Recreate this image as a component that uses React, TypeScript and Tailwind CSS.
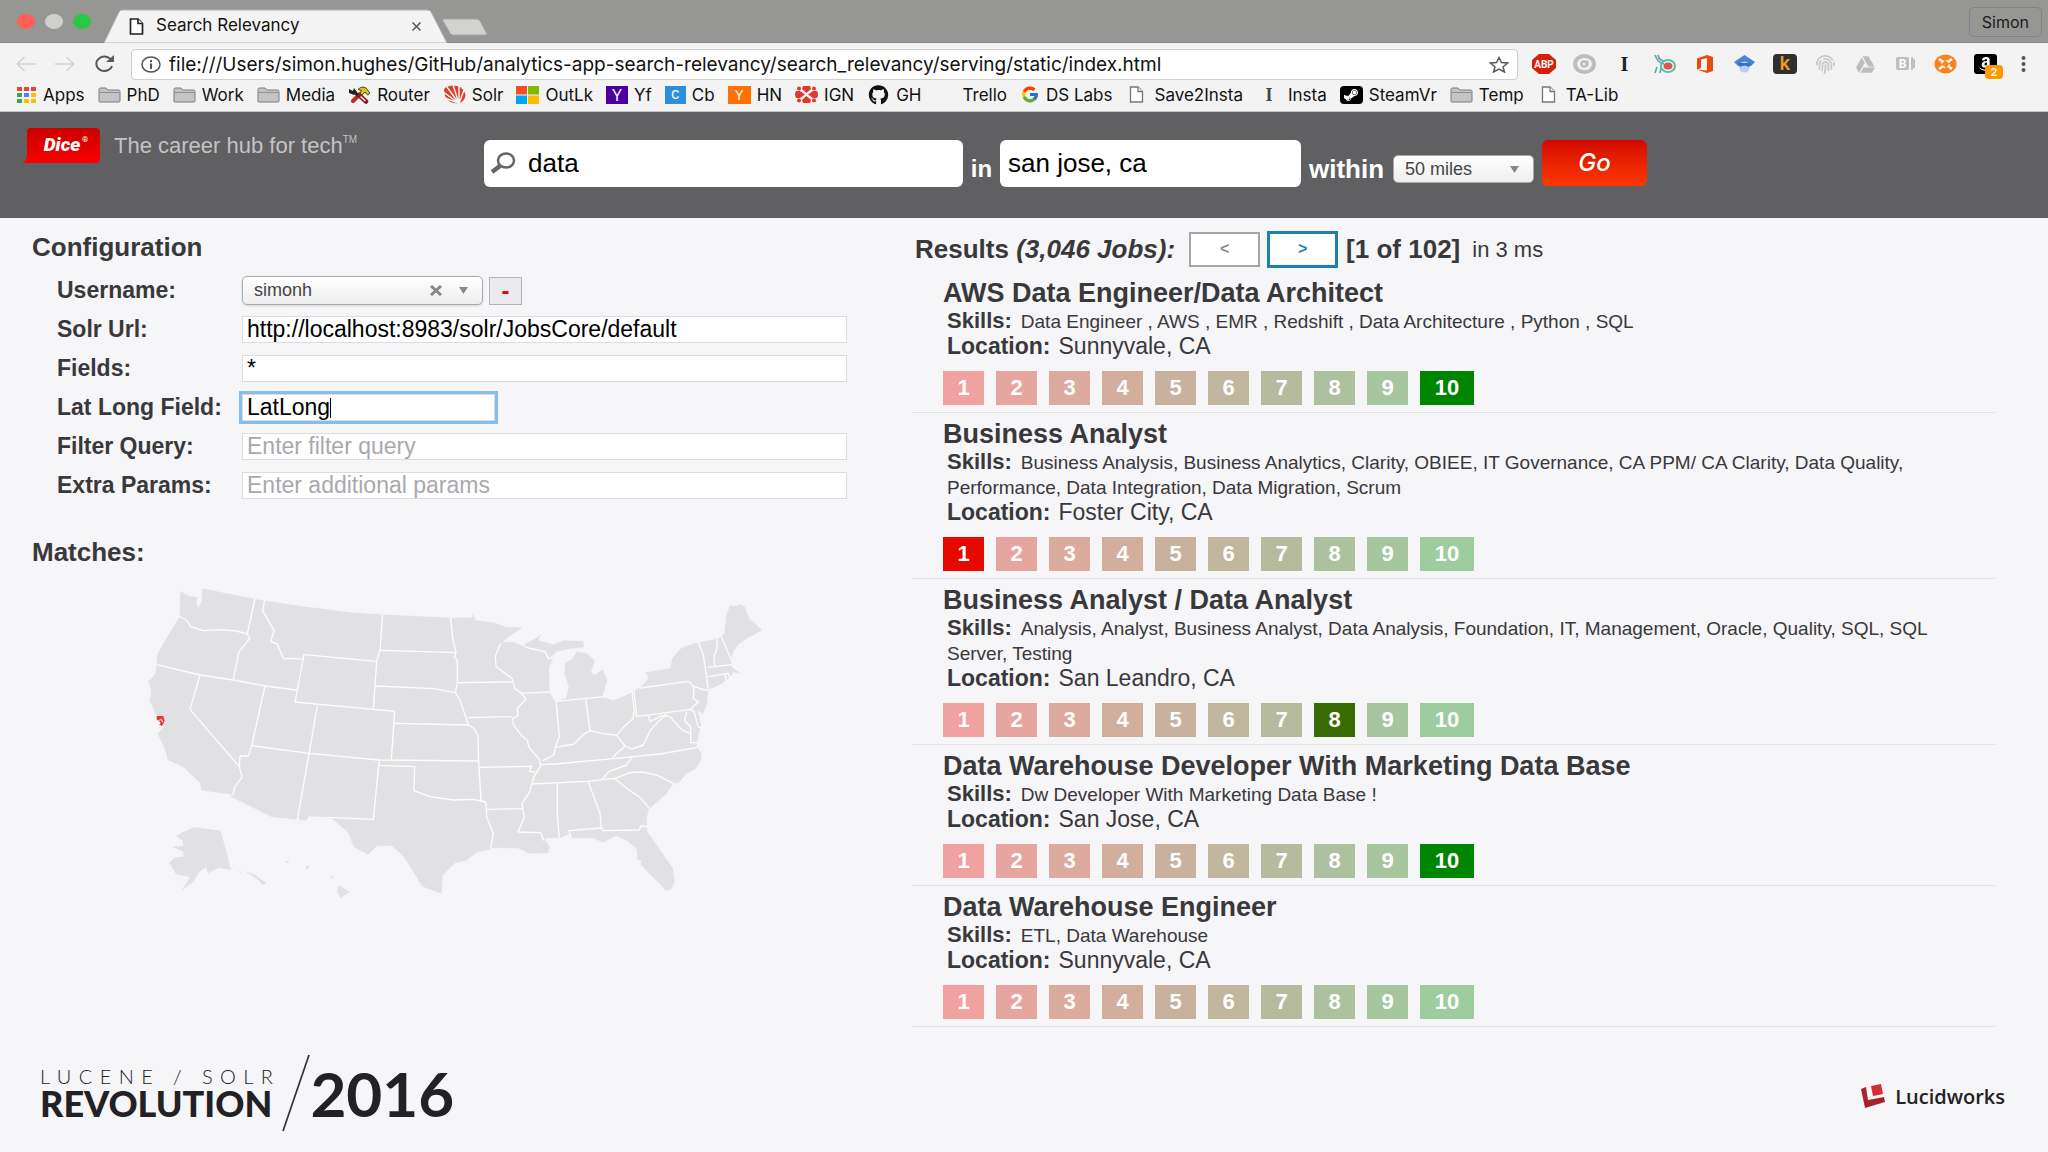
import type { ReactNode } from "react";
import { FaGithub, FaSteamSymbol, FaFingerprint, FaGoogleDrive, FaAmazon } from "react-icons/fa";
import { FcGoogle } from "react-icons/fc";

interface Job {
  title: string;
  skills: string;
  location: string;
  rating?: number;
}

interface Bookmark {
  label: string;
  icon: ReactNode;
}

const JOBS: Job[] = [
  {
    title: "AWS Data Engineer/Data Architect",
    skills: "Data Engineer , AWS , EMR , Redshift , Data Architecture , Python , SQL",
    location: "Sunnyvale, CA",
    rating: 10,
  },
  {
    title: "Business Analyst",
    skills:
      "Business Analysis, Business Analytics, Clarity, OBIEE, IT Governance, CA PPM/ CA Clarity, Data Quality, Performance, Data Integration, Data Migration, Scrum",
    location: "Foster City, CA",
    rating: 1,
  },
  {
    title: "Business Analyst / Data Analyst",
    skills:
      "Analysis, Analyst, Business Analyst, Data Analysis, Foundation, IT, Management, Oracle, Quality, SQL, SQL Server, Testing",
    location: "San Leandro, CA",
    rating: 8,
  },
  {
    title: "Data Warehouse Developer With Marketing Data Base",
    skills: "Dw Developer With Marketing Data Base !",
    location: "San Jose, CA",
    rating: 10,
  },
  {
    title: "Data Warehouse Engineer",
    skills: "ETL, Data Warehouse",
    location: "Sunnyvale, CA",
  },
];

const RATINGS = [
  { value: 1, idle: "bg-[#f0a2a0]", active: "bg-[#e60900]" },
  { value: 2, idle: "bg-[#e6a59e]", active: "bg-[#cc1f00]" },
  { value: 3, idle: "bg-[#dcab9d]", active: "bg-[#b33300]" },
  { value: 4, idle: "bg-[#d2af9d]", active: "bg-[#994000]" },
  { value: 5, idle: "bg-[#c9b29d]", active: "bg-[#804d00]" },
  { value: 6, idle: "bg-[#c0b79e]", active: "bg-[#6b5a00]" },
  { value: 7, idle: "bg-[#b7bb9d]", active: "bg-[#556200]" },
  { value: 8, idle: "bg-[#adc19e]", active: "bg-[#3a6b00]" },
  { value: 9, idle: "bg-[#a6c69f]", active: "bg-[#1d7700]" },
  { value: 10, idle: "bg-[#9dcc9f]", active: "bg-[#008500]" },
];

function FolderIcon() {
  return (
    <svg width="23" height="16" viewBox="0 0 23 16">
      <path d="M1 14.5V2.5Q1 1 2.5 1H8l2 2h10.500Q22 3 22 4.500V14q0 1-1 1H2q-1 0-1-.5Z" fill="#c4c4c6" stroke="#7d7d80" />
      <path d="M1.500 5.500h20" stroke="#8f8f92" />
    </svg>
  );
}

function FileIcon({ dark = false }: { dark?: boolean }) {
  return (
    <svg width="15" height="17" viewBox="0 0 15 17" fill="#fff" stroke={dark ? "#222" : "#777"} strokeWidth={dark ? 1.700 : 1.300}>
      <path d="M1.500 1h7.500l4.500 4.500V16h-12Z" />
      <path d="M9 1v4.500h4.500" />
    </svg>
  );
}

function AppsIcon() {
  const colors = ["#ea4335", "#ea4335", "#ea4335", "#34a853", "#4285f4", "#fbbc05", "#34a853", "#fbbc05", "#fbbc05"];
  return (
    <svg width="20" height="16" viewBox="0 0 20 16">
      {colors.map((c, i) => (
        <rect key={i} x={(i % 3) * 7} y={Math.floor(i / 3) * 6} width="5" height="4" fill={c} />
      ))}
    </svg>
  );
}

function ToolsIcon() {
  return (
    <svg width="23" height="18" viewBox="0 0 23 18" fill="none">
      <path d="M12 8 5 15" stroke="#c22a1e" strokeWidth="4" strokeLinecap="round" />
      <path d="m5 5 6 5" stroke="#222" strokeWidth="3" />
      <path d="m12 10 6 5.500" stroke="#8e1d16" strokeWidth="4.500" strokeLinecap="round" />
      <path d="m12.500 10.500 5 4.500" stroke="#eee" strokeWidth="1.500" />
      <path d="M10 3.500Q14-.5 18 2l4 5-2.500 2L17 6l-3 3-2-2 1.500-2.500Z" fill="#d8c22a" stroke="#554a10" />
      <path d="M1 3l4 2 1-3 3 4-3 3-5-2Z" fill="#222" />
    </svg>
  );
}

function SolrIcon() {
  return (
    <svg width="23" height="19" viewBox="0 0 23 19">
      <path d="M1 4Q6-1 14 1q7 2 8.500 9Q22 16 16 18.500 6 19 2 11Z" fill="#d9412b" />
      <path d="M16 18.500 1 7.500M16 18.500 4 2M16 18.500 10 0M16 18.500 16 1M16 18.500 21 5M16 18.500 2 13" stroke="#f4f4f4" strokeWidth="1.400" />
    </svg>
  );
}

function MicrosoftIcon() {
  return (
    <svg width="23" height="18" viewBox="0 0 23 18">
      <path d="M0 0h11v8.500H0Z" fill="#f25022" />
      <path d="M12 0h11v8.500H12Z" fill="#7fba00" />
      <path d="M0 9.500h11V18H0Z" fill="#00a4ef" />
      <path d="M12 9.500h11V18H12Z" fill="#ffb900" />
    </svg>
  );
}

function IgnIcon() {
  return (
    <svg width="23" height="19" viewBox="0 0 23 19" fill="#e0392b">
      <path d="M8 1h7l1 3-4.500 4L7 4ZM8 18h7l1-3-4.500-4L7 15ZM1 6h4l5 3.500L5 13H1Q-1 9.500 1 6ZM22 6h-4l-5 3.500 5 3.500h4q2-3.500 0-7Z" />
      <circle cx="4" cy="3.500" r="2" />
      <circle cx="19" cy="3.500" r="2" />
      <circle cx="4" cy="15.500" r="2" />
      <circle cx="19" cy="15.500" r="2" />
    </svg>
  );
}

const BOOKMARKS: Bookmark[] = [
  { label: "Apps", icon: <AppsIcon /> },
  { label: "PhD", icon: <FolderIcon /> },
  { label: "Work", icon: <FolderIcon /> },
  { label: "Media", icon: <FolderIcon /> },
  { label: "Router", icon: <ToolsIcon /> },
  { label: "Solr", icon: <SolrIcon /> },
  { label: "OutLk", icon: <MicrosoftIcon /> },
  {
    label: "Yf",
    icon: (
      <span className="flex h-[18px] w-[22px] items-center justify-center bg-[#4a00a0] font-['Open_Sans'] text-[17px] text-white">Y</span>
    ),
  },
  {
    label: "Cb",
    icon: <span className="flex h-[18px] w-[21px] items-center justify-center bg-[#2d8fdc] pb-0.5 text-[15px] text-white">c</span>,
  },
  {
    label: "HN",
    icon: <span className="flex h-[18px] w-[23px] items-center justify-center bg-[#ff7100] text-[13px] text-white">Y</span>,
  },
  { label: "IGN", icon: <IgnIcon /> },
  { label: "GH", icon: <FaGithub className="h-5 w-[23px] text-[#111]" /> },
  { label: "Trello", icon: <span className="w-[22px]" /> },
  { label: "DS Labs", icon: <FcGoogle className="h-[19px] w-5" /> },
  { label: "Save2Insta", icon: <span className="mx-1"><FileIcon /></span> },
  { label: "Insta", icon: <span className="w-[26px] text-center font-['Liberation_Serif'] text-[18px] font-bold text-[#444]">I</span> },
  {
    label: "SteamVr",
    icon: (
      <span className="flex h-[18px] w-[23px] items-center justify-center rounded-sm bg-black">
        <FaSteamSymbol className="size-4 text-white" />
      </span>
    ),
  },
  { label: "Temp", icon: <FolderIcon /> },
  { label: "TA-Lib", icon: <span className="mx-1"><FileIcon /></span> },
];

function TabStrip() {
  return (
    <div className="flex h-[43px] items-end border-b border-[#868686] bg-[#969795]">
      <div className="flex h-full w-[104px] items-center gap-[10px] pl-[17px]">
        <span className="h-[15px] w-[18px] rounded-[50%] bg-[#ff5f57]" />
        <span className="h-[15px] w-[18px] rounded-[50%] bg-[#d0cfce]" />
        <span className="h-[15px] w-[18px] rounded-[50%] bg-[#28ca41]" />
      </div>
      <div className="relative -mb-px h-[34px] w-[343px]">
        <svg className="absolute inset-0" width="343" height="34" viewBox="0 0 343 34">
          <path d="M0 34 15 3Q16 1 18 1H323q3 0 4 2l16 31Z" fill="#f4f4f4" stroke="#b2b2b2" />
        </svg>
        <div className="relative flex h-full items-center pr-6 pl-[25px]">
          <FileIcon dark />
          <span className="ml-[12px] flex-1 text-[17px] text-[#111]">Search Relevancy</span>
          <button aria-label="Close tab" className="p-0.5">
            <svg width="9" height="9" viewBox="0 0 9 9" stroke="#555" strokeWidth="1.500">
              <path d="m0.500 0.500 8 8m0-8-8 8" />
            </svg>
          </button>
        </div>
      </div>
      <button aria-label="New tab" className="mb-[6px] -ml-[5px]">
        <svg width="46" height="18" viewBox="0 0 46 18">
          <path d="M1 3q-1-2 1-2h32q3 0 4 2l7 13q0 1-2 1H11q-2 0-3-2Z" fill="#d2d2d1" stroke="#a5a5a5" />
        </svg>
      </button>
      <button className="mr-[6px] mb-[5px] ml-auto h-[30px] rounded-[5px] border border-[#828381] px-3 text-[16px] text-[#1b1b1b]">
        Simon
      </button>
    </div>
  );
}

function Extensions() {
  return (
    <div className="flex h-[30px] items-center gap-[17px] pr-[19px] pl-[14px]">
      <svg width="24" height="20" viewBox="0 0 24 20">
        <path d="M7 0h10l7 6v8l-7 6H7l-7-6V6Z" fill="#d81e06" />
        <text x="12" y="13.500" textAnchor="middle" fontFamily="Roboto" fontSize="10" fontWeight="700" fill="#fff">ABP</text>
      </svg>
      <svg width="23" height="20" viewBox="0 0 23 20" fill="none" stroke="#bcbcbc">
        <ellipse cx="11.500" cy="10" rx="9.500" ry="8" strokeWidth="4" />
        <circle cx="11" cy="10" r="2.500" strokeWidth="2.500" />
        <path d="M14.500 6.500v6" strokeWidth="2" />
      </svg>
      <span className="w-[23px] text-center font-['Liberation_Serif'] text-[20px] leading-5 font-bold text-[#222]">I</span>
      <svg width="23" height="20" viewBox="0 0 23 20" fill="none">
        <path d="M2 1q3 8 9 9M5 1q1 5 6 6m-9 12 2-6m3 6 1-5" stroke="#6ba7a0" strokeWidth="1.700" />
        <ellipse cx="15" cy="12" rx="7" ry="6" stroke="#55bdb5" strokeWidth="2" />
        <ellipse cx="15" cy="12" rx="4.500" ry="3.500" fill="#d95a48" />
      </svg>
      <svg width="23" height="20" viewBox="0 0 23 20">
        <path d="M4 4.500 14 1l6 2v14l-6 2-10-3.500 10 1V4L8 5.500V14l-4 1.500Z" fill="#eb4a0b" />
      </svg>
      <svg width="23" height="20" viewBox="0 0 23 20">
        <path d="M11.500 1 22 8l-4 4H5L1 8Z" fill="#4584d9" />
        <circle cx="11.500" cy="13" r="5.500" fill="#b7d0fa" />
        <path d="M5 9h13l-2 4q-5-3-9 0Z" fill="#3a6fc4" />
      </svg>
      <span className="flex h-5 w-6 items-center justify-center rounded-[4px] bg-[#2d2f31] text-[19px] font-semibold text-[#f09a1c]">k</span>
      <FaFingerprint className="h-[19px] w-[23px] text-[#c9c9c9]" />
      <FaGoogleDrive className="h-[19px] w-[23px] text-[#bdbdbd]" />
      <svg width="23" height="20" viewBox="0 0 23 20">
        <rect x="2" y="3" width="13" height="13" rx="2" fill="#bfbfbf" />
        <path d="M17 4h1v11h-1M20 5v9" stroke="#bfbfbf" strokeWidth="2" fill="none" />
        <text x="8.500" y="14" textAnchor="middle" fontFamily="Roboto" fontSize="12" fontWeight="700" fill="#fff">B</text>
      </svg>
      <svg width="23" height="20" viewBox="0 0 23 20">
        <ellipse cx="11.500" cy="10" rx="11" ry="9.500" fill="#f6851f" />
        <path d="m5 5 3 2m10-2-3 2M5 15l3-2m10 2-3-2" stroke="#fff" strokeWidth="2.500" />
        <ellipse cx="11.500" cy="10" rx="4" ry="3.500" fill="none" stroke="#fff" strokeWidth="1.500" strokeDasharray="4 2" />
      </svg>
      <span className="relative flex h-5 w-[23px] items-center justify-center rounded-[3px] bg-black">
        <FaAmazon className="size-4 text-white" />
        <span className="absolute top-[11px] left-[11px] h-[14px] w-[18px] rounded-sm bg-[#ff9900] text-center text-[11px] leading-[14px] font-semibold text-white">
          2
        </span>
      </span>
      <svg className="ml-1" width="11" height="18" viewBox="0 0 11 18" fill="#555">
        <circle cx="5.500" cy="3" r="2" />
        <circle cx="5.500" cy="9" r="2" />
        <circle cx="5.500" cy="15" r="2" />
      </svg>
    </div>
  );
}

function Toolbar() {
  return (
    <div className="flex h-[37px] items-center bg-[#f3f3f4] pt-[5px] pl-4">
      <div className="flex w-[115px] items-center gap-[19px]">
        <button aria-label="Back">
          <svg width="20" height="16" viewBox="0 0 20 16" fill="none" stroke="#d3d3d3" strokeWidth="1.700">
            <path d="M20 8H1.500m7-7-7 7 7 7" />
          </svg>
        </button>
        <button aria-label="Forward">
          <svg width="20" height="16" viewBox="0 0 20 16" fill="none" stroke="#d3d3d3" strokeWidth="1.700">
            <path d="M0 8h18.500m-7-7 7 7-7 7" />
          </svg>
        </button>
        <button aria-label="Reload">
          <svg width="21" height="18" viewBox="0 0 21 18">
            <path d="M17.500 5.500A8 7.200 0 1 0 18 11" fill="none" stroke="#5a5a5a" strokeWidth="2" />
            <path d="M20 0v7h-8Z" fill="#5a5a5a" />
          </svg>
        </button>
      </div>
      <div className="flex h-[31px] flex-1 items-center rounded-[4px] border border-[#cfcfd1] bg-white pr-2 pl-[9px]">
        <svg width="20" height="17" viewBox="0 0 20 17" fill="none" stroke="#555">
          <ellipse cx="10" cy="8.500" rx="9" ry="7.500" strokeWidth="1.500" />
          <path d="M10 7.500V13M10 4v2" strokeWidth="2" />
        </svg>
        <input
          aria-label="Address"
          className="ml-2 flex-1 bg-transparent text-[19px] leading-[29px] text-[#111] outline-none"
          defaultValue="file:///Users/simon.hughes/GitHub/analytics-app-search-relevancy/search_relevancy/serving/static/index.html"
        />
        <button aria-label="Bookmark this page">
          <svg width="20" height="17" viewBox="0 0 20 17" fill="none" stroke="#5a5a5a" strokeWidth="1.500">
            <path d="m10 1.500 2.500 5 6 .5-4.500 4 1.500 5-5.500-3-5.500 3L6 11 1.500 7l6-.5Z" />
          </svg>
        </button>
      </div>
      <Extensions />
    </div>
  );
}

function BookmarkBar() {
  return (
    <nav className="flex h-[32px] items-center gap-[13px] border-b border-[#c4c4c6] bg-[#f3f3f4] pb-0.5 pl-[17px]">
      {BOOKMARKS.map((b) => (
        <a key={b.label} href="#" className="flex h-6 items-center gap-[6px] text-[17px] leading-6 text-[#111]">
          {b.icon}
          {b.label}
        </a>
      ))}
    </nav>
  );
}

function SearchHeader() {
  return (
    <header className="flex h-[106px] items-start bg-[#605f61] pt-[16px] pl-[22px]">
      <svg width="78" height="36" viewBox="0 0 78 36">
        <defs>
          <linearGradient id="dice" x1="0" y1="0" x2="0" y2="1">
            <stop offset="0" stopColor="#c80000" />
            <stop offset="1" stopColor="#fb0000" />
          </linearGradient>
        </defs>
        <path d="M9 0h64q5 0 5 4v27q0 4-5 4H0q5-3 5-8V4q0-4 4-4Z" fill="url(#dice)" />
        <text x="40" y="23" textAnchor="middle" fontFamily="Roboto" fontSize="19" fontWeight="900" fontStyle="italic" fill="#fff">Dice</text>
        <text x="60" y="14" fontFamily="Roboto" fontSize="8" fill="#fff">®</text>
      </svg>
      <p className="w-[384px] pl-[14px] text-[22px] leading-[35px] text-[#c4c3c5]">
        The career hub for tech<span className="align-top text-[10px] leading-[24px]">TM</span>
      </p>
      <form className="flex flex-1 items-start pt-[12px] text-[26px]" onSubmit={(e) => e.preventDefault()}>
        <div className="relative w-[479px]">
          <svg className="absolute top-[12px] left-[6px]" width="26" height="22" viewBox="0 0 26 22" fill="none" stroke="#666">
            <ellipse cx="16" cy="8.500" rx="8" ry="7" strokeWidth="2.500" />
            <path d="m10 14-8 6" strokeWidth="4.500" />
          </svg>
          <input aria-label="Search jobs" defaultValue="data" className="h-[47px] w-full rounded-[6px] bg-white pl-[44px] text-black" />
        </div>
        <label htmlFor="where" className="w-[37px] pt-[12px] text-center text-[24px] leading-[34px] font-bold text-white">in</label>
        <input id="where" defaultValue="san jose, ca" className="h-[47px] w-[301px] rounded-[6px] bg-white pl-[8px] text-black" />
        <label htmlFor="radius" className="w-[92px] pt-[12px] pl-2 leading-[34px] font-bold text-white">within</label>
        <div className="relative mt-[15px] w-[141px]">
          <select
            id="radius"
            className="block h-[28px] w-full appearance-none rounded-[5px] border border-[#aaa] bg-linear-to-b from-white to-[#eeeeef] pl-[11px] text-[18px] leading-[26px] text-[#444]"
          >
            <option>50 miles</option>
          </select>
          <svg className="absolute top-[11px] right-[15px]" width="9" height="7" viewBox="0 0 9 7" fill="#888">
            <path d="M0 0h9l-4.500 7Z" />
          </svg>
        </div>
        <button className="ml-[8px] h-[46px] w-[105px] rounded-[6px] bg-linear-to-b from-[#d30500] to-[#ff3600] font-['Inter'] text-[24px] font-medium text-white italic">
          Go
        </button>
      </form>
    </header>
  );
}

const FIELD_INPUT =
  "h-[27px] border border-[#dcdbde] bg-white px-1 text-[23px] leading-[25px] text-black placeholder:text-[#a9a9ab]";

function Configuration() {
  return (
    <section>
      <h2 className="text-[26px] leading-[34px] font-bold">Configuration</h2>
      <div className="mt-[7px] ml-[25px] grid grid-cols-[185px_605px] auto-rows-[39px] items-center text-[23px] font-bold">
        <label htmlFor="username">Username:</label>
        <div className="flex items-center gap-[6px] font-normal">
          <div className="relative w-[241px]">
            <select
              id="username"
              className="block h-[29px] w-full appearance-none rounded-[5px] border border-[#aaa] bg-linear-to-b from-white to-[#eeeeef] pl-[11px] text-[18px] leading-[27px] text-[#444] shadow-sm"
            >
              <option>simonh</option>
            </select>
            <button aria-label="Clear username" className="absolute top-[9px] right-[41px]">
              <svg width="12" height="11" viewBox="0 0 12 11" stroke="#888" strokeWidth="3">
                <path d="m1 1 10 9M11 1 1 10" />
              </svg>
            </button>
            <svg className="absolute top-[11px] right-[15px]" width="9" height="7" viewBox="0 0 9 7" fill="#888">
              <path d="M0 0h9l-4.500 7Z" />
            </svg>
          </div>
          <button aria-label="Remove user" className="h-[28px] w-[33px] border border-[#b4b4b6] bg-[#ebebed] text-[24px] leading-6 font-bold text-red-600">
            -
          </button>
        </div>
        <label htmlFor="solr-url">Solr Url:</label>
        <input id="solr-url" className={`${FIELD_INPUT} font-normal`} defaultValue="http://localhost:8983/solr/JobsCore/default" />
        <label htmlFor="fields">Fields:</label>
        <input id="fields" className={`${FIELD_INPUT} font-normal`} defaultValue="*" />
        <label htmlFor="lat-long">Lat Long Field:</label>
        <div className="relative w-[253px] font-normal">
          <input id="lat-long" className={`${FIELD_INPUT} block w-full outline-[3px] outline-[#85bdec]`} defaultValue="LatLong" />
          <span className="absolute top-[4px] left-[88px] h-[20px] w-px bg-black" />
        </div>
        <label htmlFor="filter-query">Filter Query:</label>
        <input id="filter-query" className={`${FIELD_INPUT} font-normal`} placeholder="Enter filter query" />
        <label htmlFor="extra-params">Extra Params:</label>
        <input id="extra-params" className={`${FIELD_INPUT} font-normal`} placeholder="Enter additional params" />
      </div>
    </section>
  );
}

const MAINLAND =
  "M180 62 205 76 232 82 230 100 235 112 244 92 246 54 405 86 550 108 700 127 790 133 992 142 1055 142 1058 127 1068 150 1120 156 1160 170 1212 172 1170 198 1150 216 1180 215 1208 226 1245 205 1266 191 1256 210 1300 222 1330 210 1390 212 1393 233 1345 238 1310 246 1286 268 1301 264 1288 292 1290 365 1304 393 1338 384 1345 350 1332 310 1335 278 1356 266 1370 244 1402 250 1426 272 1414 306 1424 314 1448 297 1463 330 1448 380 1480 390 1520 374 1560 352 1585 324 1576 306 1650 294 1656 264 1685 232 1735 216 1795 205 1812 190 1818 135 1830 103 1842 108 1862 102 1875 110 1890 146 1928 180 1902 196 1880 206 1855 225 1842 244 1834 270 1836 290 1866 312 1840 308 1826 328 1800 345 1765 360 1763 400 1750 432 1735 424 1744 466 1735 500 1732 530 1746 552 1744 570 1730 596 1700 612 1675 640 1660 642 1640 672 1590 716 1581 742 1583 785 1625 845 1660 895 1665 935 1655 958 1638 963 1615 938 1585 910 1560 882 1563 872 1552 870 1550 838 1520 812 1487 799 1450 818 1415 805 1354 806 1348 792 1325 804 1275 806 1290 832 1285 850 1230 852 1195 836 1115 834 1108 840 1070 848 1040 872 1005 880 970 915 965 972 905 950 885 915 850 860 815 828 770 829 745 855 700 832 685 790 640 750 628 742 565 740 560 752 455 742 330 680 335 674 242 662 240 640 190 592 142 570 135 540 112 492 130 470 108 437 88 392 93 360 84 335 106 310 112 250 150 185 178 140Z";

// State lines, drawn in white over the mainland shape
const STATE_LINES = [
  "M175 138 200 150 212 170 250 182 300 179 350 183 382 192 390 205 357 245 340 328",
  "M405 86 382 192",
  "M110 284 240 315 340 330 435 348 530 360",
  "M434 90 428 122 462 182 452 215 472 222 490 266 520 265 548 268",
  "M240 315 210 418 358 590",
  "M435 348 395 528 385 558 360 558 358 590 366 622 345 650 338 676",
  "M552 254 525 396 760 418",
  "M552 254 548 268M552 254 770 274",
  "M788 133 780 240 770 274 760 418 824 424 814 568",
  "M780 241 1008 248M992 142 998 205 1008 248 1003 262 1012 270 1012 340 1006 368",
  "M767 348 940 356 1006 368 1020 390 1030 420 1045 465",
  "M822 460 1045 465 1062 475 1074 498 1076 575",
  "M592 408 532 750M395 527 568 550 776 570 1076 573",
  "M778 570 776 586 884 590 882 662 930 680 1000 690 1060 688 1098 696",
  "M776 586 760 748 628 742",
  "M1076 573 1083 692 1098 698 1100 740 1120 792 1112 835",
  "M1012 338 1176 336M1043 443 1175 440M1080 592 1235 589 1228 605 1246 606",
  "M1142 220 1126 258 1128 290 1176 325 1184 355 1205 370 1218 388 1192 415 1194 438 1178 445 1180 465 1208 500 1222 510 1226 530 1258 568 1262 588 1242 620 1228 668 1206 700 1213 742 1194 786 1262 788 1272 812",
  "M1205 225 1225 234 1275 245 1287 268M1202 370 1290 366",
  "M1308 392 1318 500 1306 532 1302 555 1268 572M1309 394 1452 380M1397 386 1410 482",
  "M1306 532 1362 522 1392 492 1410 482 1445 490 1490 496 1512 470 1540 445 1542 420 1536 362",
  "M1490 496 1515 528 1478 562M1515 528 1535 537 1570 525 1590 482 1625 445 1640 432",
  "M1262 584 1305 582 1480 566 1620 552 1733 532",
  "M1236 642 1400 634 1485 625 1530 608 1568 606 1612 616 1660 640",
  "M1535 562 1520 585 1468 604 1447 627M1485 627 1520 655 1560 682 1590 718",
  "M1312 640 1312 738 1318 802M1404 634 1440 730 1444 772 1450 782 1558 780 1562 768 1583 770",
  "M1354 802 1346 782 1444 774M1100 718 1206 716",
  "M1560 354 1705 334 1722 350 1762 362M1550 440 1712 418 1722 424 1734 470 1746 474",
  "M1722 350 1720 385 1735 395 1712 418M1542 362 1550 440",
  "M1586 438 1590 455 1625 437 1650 440 1672 465 1690 482 1712 490",
  "M1700 425 1694 452 1712 470 1712 518 1734 518",
  "M1735 216 1750 255 1760 322 1765 360M1762 292 1836 284M1764 320 1826 310 1830 328",
  "M1792 208 1790 240 1782 258 1784 288M1802 196 1834 270M1816 312 1818 335",
];

function UsMap() {
  return (
    <svg className="mt-px ml-[88px] block" width="660" height="340" viewBox="0 0 1980 1020" fill="#e1e0e3">
      <path d={MAINLAND} stroke="#f7f6f8" strokeWidth="2" />
      <g fill="none" stroke="#fdfdfd" strokeWidth="4" strokeLinejoin="round">
        {STATE_LINES.map((d) => (
          <path key={d} d={d} />
        ))}
      </g>
      <path d="M168 798 190 785 222 772 302 782 334 900 296 894 264 910 258 892 238 905 220 935 184 962 210 922 168 912 148 878 165 862 190 860 190 844 155 830 190 828 188 812Z" />
      <path d="M350 902 364 906 362 908ZM375 904 405 914 425 930 440 938 428 946 418 932 400 920Z" />
      <path d="M655 945 690 965 660 984 652 966ZM494 875 508 870 504 878ZM555 890 568 886 564 900ZM630 916 645 922 634 925Z" />
      <path d="m110 438 20 0 4 14-8 16-8-4 4-6-12-10Z" fill="#e03c3c" />
      <path d="m116 452 8-4 4 8" stroke="#fff" strokeWidth="3" fill="none" />
    </svg>
  );
}

function JobCard({ job }: { job: Job }) {
  return (
    <li className="border-b border-[#e2e1e4] pt-[5px] pr-[10px] pb-[7px] pl-[31px]">
      <h3 className="text-[27px] leading-[32px] font-bold">{job.title}</h3>
      <p className="pl-1 text-[19px] leading-[25px]">
        <strong className="mr-[9px] text-[22px] leading-[24px]">Skills:</strong>
        {job.skills}
      </p>
      <p className="pl-1 text-[23px] leading-[25px]">
        <strong className="mr-[8px]">Location:</strong>
        {job.location}
      </p>
      <div className="mt-[12px] flex gap-[12px]">
        {RATINGS.map((r) => (
          <button
            key={r.value}
            className={`h-[34px] text-[22px] leading-[34px] font-bold text-white ${r.value === 10 ? "w-[54px]" : "w-[41px]"} ${
              job.rating === r.value ? r.active : r.idle
            }`}
          >
            {r.value}
          </button>
        ))}
      </div>
    </li>
  );
}

function Results() {
  return (
    <section className="mr-[53px] flex-1">
      <div className="flex h-[54px] items-center pt-2 pl-[3px] text-[26px] font-bold">
        <h2>
          Results <em>(3,046 Jobs):</em>
        </h2>
        <button className="ml-[14px] h-[35px] w-[71px] border-2 border-[#a5a5a7] bg-white text-[16px] text-[#8a8a8c]">&lt;</button>
        <button className="ml-[7px] h-[37px] w-[71px] border-[3px] border-[#1a80b8] bg-white text-[16px] text-[#1a80b8]">&gt;</button>
        <span className="ml-[8px]">[1 of 102]</span>
        <span className="ml-[12px] text-[22px] font-normal">in 3 ms</span>
      </div>
      <ul>
        {JOBS.map((job) => (
          <JobCard key={job.title} job={job} />
        ))}
      </ul>
    </section>
  );
}

function Footer() {
  return (
    <footer className="flex flex-1 items-center justify-between pt-[6px] pr-[43px] pl-[40px] font-['Lato'] text-[#232124]">
      <div className="flex items-center">
        <div className="pt-[2px]">
          <p className="text-[20px] leading-[18px] font-light tracking-[0.37em]">LUCENE / SOLR</p>
          <p className="text-[36px] leading-[36px] font-black">REVOLUTION</p>
        </div>
        <svg className="ml-0.5" width="28" height="78" viewBox="0 0 28 78" stroke="#333" strokeWidth="1.700">
          <path d="M27 1 1 77" />
        </svg>
        <p className="text-[62px] leading-[62px] font-bold">2016</p>
      </div>
      <div className="flex items-center gap-[10px] pt-[8px] font-['Open_Sans'] text-[20px] font-semibold">
        <svg width="24" height="25" viewBox="0 0 24 25">
          <path d="M0 5 5 3l2 13 16-3 1 5-20 6Z" fill="#a3242d" />
          <path d="M10 2 20 0l2 10-10 2Z" fill="#d32f33" />
        </svg>
        Lucidworks
      </div>
    </footer>
  );
}

export default function App() {
  return (
    <div className="flex min-h-screen flex-col bg-[#f6f5f7] font-['Liberation_Sans',sans-serif] text-[#39383b]">
      <div className="font-['Inter',sans-serif]">
        <TabStrip />
        <Toolbar />
        <BookmarkBar />
      </div>
      <SearchHeader />
      <main className="flex">
        <div className="w-[912px] pt-[12px] pl-[32px]">
          <Configuration />
          <h2 className="mt-[30px] text-[26px] leading-[34px] font-bold">Matches:</h2>
          <UsMap />
        </div>
        <Results />
      </main>
      <Footer />
    </div>
  );
}
